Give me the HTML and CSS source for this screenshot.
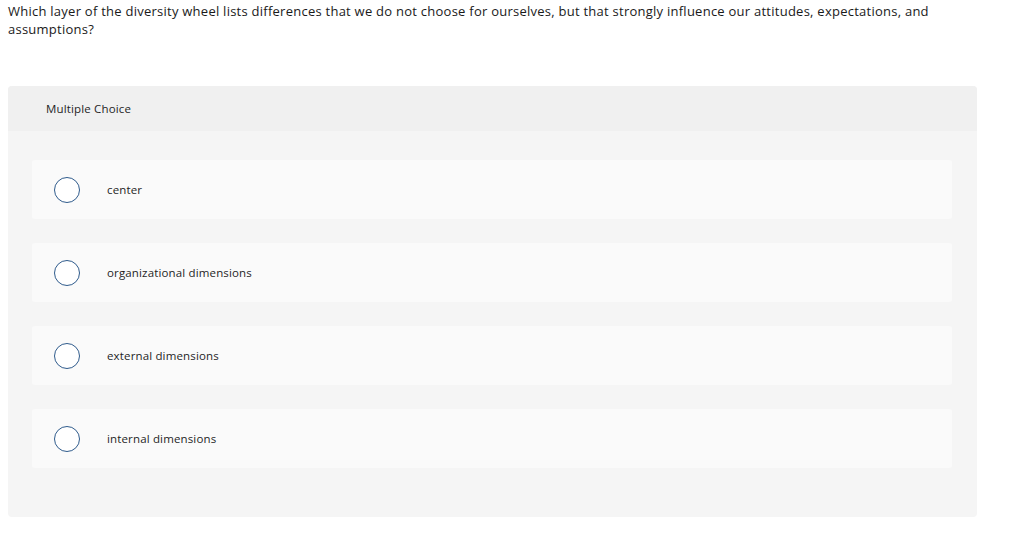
FILE: index.html
```html
<!DOCTYPE html>
<html>
<head>
<meta charset="utf-8">
<link rel="stylesheet" href="styles.css">
</head>
<body>
<div class="page">
  <p class="question">Which layer of the diversity wheel lists differences that we do not choose for ourselves, but that strongly influence our attitudes, expectations, and assumptions?</p>
  <div class="mc">
    <div class="mc-head">Multiple Choice</div>
    <div class="mc-body">
      <div class="opt"><span class="radio"></span><span class="label">center</span></div>
      <div class="opt"><span class="radio"></span><span class="label">organizational dimensions</span></div>
      <div class="opt"><span class="radio"></span><span class="label">external dimensions</span></div>
      <div class="opt"><span class="radio"></span><span class="label">internal dimensions</span></div>
    </div>
  </div>
</div>
</body>
</html>
```
FILE: styles.css
```css
html, body { margin: 0; padding: 0; background: #fff; }
body { font-family: "Open Sans", "Noto Sans", sans-serif; color: #1a1a1a; }
.page { padding: 0 8px; width: 969px; }
.question { margin: 0; padding-top: 2px; font-size: 13px; line-height: 18px; letter-spacing: 0.25px; }
.mc { margin-top: 48px; background: #f5f5f5; border-radius: 4px; }
.mc-head { height: 45px; background: #f0f0f0; border-radius: 4px 4px 0 0; padding-left: 38px; display: flex; align-items: center; font-size: 11.5px; letter-spacing: 0.15px; color: #1f1f1f; }
.mc-body { padding: 29px 25px 49px 24px; display: flex; flex-direction: column; gap: 24px; }
.opt { height: 59px; background: #fafafa; border-radius: 3px; display: flex; align-items: center; padding-left: 22px; }
.radio { width: 24px; height: 24px; border: 1px solid #2f5b8c; border-radius: 50%; background: #fff; flex: none; }
.label { margin-left: 27px; font-size: 11.5px; letter-spacing: 0.15px; color: #1f1f1f; }
```
